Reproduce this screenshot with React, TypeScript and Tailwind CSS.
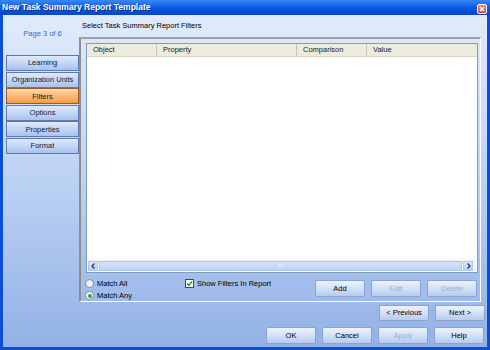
import React from "react";

const font = { fontFamily: '"Liberation Sans", Arial, sans-serif' };

function Btn({ label, disabled, w = "w-[50px]", h = "h-[17px]" }: { label: string; disabled?: boolean; w?: string; h?: string }) {
  return (
    <div
      className={`${w} ${h} flex items-center justify-center border border-[#8aa3cf] rounded-[2px] bg-gradient-to-b from-[#eef3fd] via-[#d3e0f8] to-[#b7cbef] text-[7.5px] ${disabled ? "text-[#a3aecb]" : "text-black"}`}
    >
      {label}
    </div>
  );
}

function NavBtn({ label, active }: { label: string; active?: boolean }) {
  return (
    <div
      className={`h-[16px] flex items-center justify-center border text-[7.5px] ${
        active
          ? "border-[#9a5a28] bg-gradient-to-b from-[#ffd9ad] via-[#fdb877] to-[#f59a48] text-[#1a1208]"
          : "border-[#5d79ae] bg-gradient-to-b from-[#dfeafc] via-[#c3d6f6] to-[#a9c2ec] text-[#0e1c40]"
      }`}
    >
      {label}
    </div>
  );
}

export default function App() {
  return (
    <div className="w-[490px] h-[350px] flex flex-col overflow-hidden" style={font}>
      {/* Title bar */}
      <div className="h-[15px] flex items-center justify-between pl-[2px] pr-[3px] bg-gradient-to-b from-[#3a88f6] via-[#0a5ae6] to-[#0645c9]">
        <span className="text-white font-bold text-[8.5px] [text-shadow:1px_1px_0_#0a2a80]">New Task Summary Report Template</span>
        <div className="w-[10px] h-[10px] mt-[2px] rounded-[2px] border border-white bg-gradient-to-b from-[#f08a6a] to-[#d2482a] flex items-center justify-center">
          <svg width="6" height="6" viewBox="0 0 6 6">
            <path d="M1 1 L5 5 M5 1 L1 5" stroke="white" strokeWidth="1.4" />
          </svg>
        </div>
      </div>
      {/* Body */}
      <div className="flex-1 flex border-l-[3px] border-r-[3px] border-b-[3px] border-[#0b4fd8] bg-gradient-to-b from-[#e0ebfc] via-[#bcd2f4] to-[#93b1e6]">
        {/* Left column */}
        <div className="w-[76px] flex flex-col pl-[3px]">
          <div className="h-[36px] pt-[14px] text-center text-[7.5px] text-[#3a66cc] leading-[9px]">Page 3 of 6</div>
          <div className="flex flex-col gap-[0.6px] mt-[4px]">
            <NavBtn label="Learning" />
            <NavBtn label="Organization Units" />
            <NavBtn label="Filters" active />
            <NavBtn label="Options" />
            <NavBtn label="Properties" />
            <NavBtn label="Format" />
          </div>
        </div>
        {/* Right column */}
        <div className="flex-1 flex flex-col">
          <div className="h-[22px] pl-[3px] pt-[6px] text-[7.5px] leading-[9px] text-black">Select Task Summary Report Filters</div>
          <div className="h-[265px] mr-[6px] flex flex-col border-t-2 border-l-2 border-t-[#a2a2a2] border-l-[#8e8e8e] border-r border-b border-r-white border-b-white pl-[5px] pr-[2px] pt-[4px]">
            {/* Table */}
            <div className="h-[230px] flex flex-col border border-[#7f9db9] bg-white">
              <div className="h-[13px] flex text-[7.5px] text-[#222] bg-[#ecebdc] border-b border-[#d8d4c2]">
                <div className="w-[70px] pl-[6px] flex items-center border-r border-r-[#c9c5b2]">Object</div>
                <div className="w-[140px] pl-[6px] flex items-center border-r border-r-[#c9c5b2]">Property</div>
                <div className="w-[70px] pl-[6px] flex items-center border-r border-r-[#c9c5b2]">Comparison</div>
                <div className="flex-1 pl-[6px] flex items-center">Value</div>
              </div>
              <div className="flex-1" />
              <div className="h-[11px] mb-[1px] mx-[1px] flex items-center gap-px bg-[#eef2fb]">
                <div className="w-[10px] h-[10px] flex items-center justify-center border border-[#b5c8ee] bg-gradient-to-b from-[#dbe6fb] to-[#bccff3]">
                  <svg width="5" height="6" viewBox="0 0 5 6"><path d="M3.5 0.5 L1 3 L3.5 5.5" stroke="#1d2d5e" strokeWidth="1.2" fill="none" /></svg>
                </div>
                <div className="flex-1 h-[10px] flex items-center justify-center border border-[#b2c6ee] bg-gradient-to-b from-[#d5e2fb] to-[#bfd1f4]">
                  <svg width="6" height="5" viewBox="0 0 6 5"><path d="M1 1 V4 M3 1 V4 M5 1 V4" stroke="#e8f0ff" strokeWidth="1" /></svg>
                </div>
                <div className="w-[10px] h-[10px] flex items-center justify-center border border-[#b5c8ee] bg-gradient-to-b from-[#dbe6fb] to-[#bccff3]">
                  <svg width="5" height="6" viewBox="0 0 5 6"><path d="M1.5 0.5 L4 3 L1.5 5.5" stroke="#1d2d5e" strokeWidth="1.2" fill="none" /></svg>
                </div>
                <div className="w-[2px]" />
              </div>
            </div>
            {/* Controls */}
            <div className="flex mt-[6px]">
              <div className="w-[100px] flex flex-col gap-[3px] ml-[-1px] text-[7.5px] text-black">
                <div className="flex items-center gap-[3px] h-[9px]">
                  <div className="w-[9px] h-[9px] rounded-full border border-[#7d8ca8] bg-gradient-to-br from-[#e8e8e0] to-white" />
                  <span>Match All</span>
                </div>
                <div className="flex items-center gap-[3px] h-[9px]">
                  <div className="w-[9px] h-[9px] rounded-full border border-[#7d8ca8] bg-white flex items-center justify-center">
                    <div className="w-[4px] h-[4px] rounded-full bg-[#24a83a]" />
                  </div>
                  <span>Match Any</span>
                </div>
              </div>
              <div className="flex items-start gap-[3px] text-[7.5px] text-black">
                <div className="w-[9px] h-[9px] border border-[#1f4f82] bg-white flex items-center justify-center">
                  <svg width="7" height="7" viewBox="0 0 7 7"><path d="M1 3.5 L2.8 5.3 L6 1.5" stroke="#21a52b" strokeWidth="1.5" fill="none" /></svg>
                </div>
                <span className="leading-[9px]">Show Filters In Report</span>
              </div>
              <div className="flex-1" />
              <div className="flex gap-[6px] mr-[1px] mt-[1px]">
                <Btn label="Add" />
                <Btn label="Edit" disabled />
                <Btn label="Delete" disabled />
              </div>
            </div>
          </div>
          <div className="flex justify-end gap-[6px] mt-[3px] mr-[2px]">
            <Btn label="< Previous" h="h-[16px]" />
            <Btn label="Next >" h="h-[16px]" />
          </div>
          <div className="flex justify-end gap-[6px] mt-[6px] mr-[3px]">
            <Btn label="OK" />
            <Btn label="Cancel" />
            <Btn label="Apply" disabled />
            <Btn label="Help" />
          </div>
        </div>
      </div>
    </div>
  );
}
